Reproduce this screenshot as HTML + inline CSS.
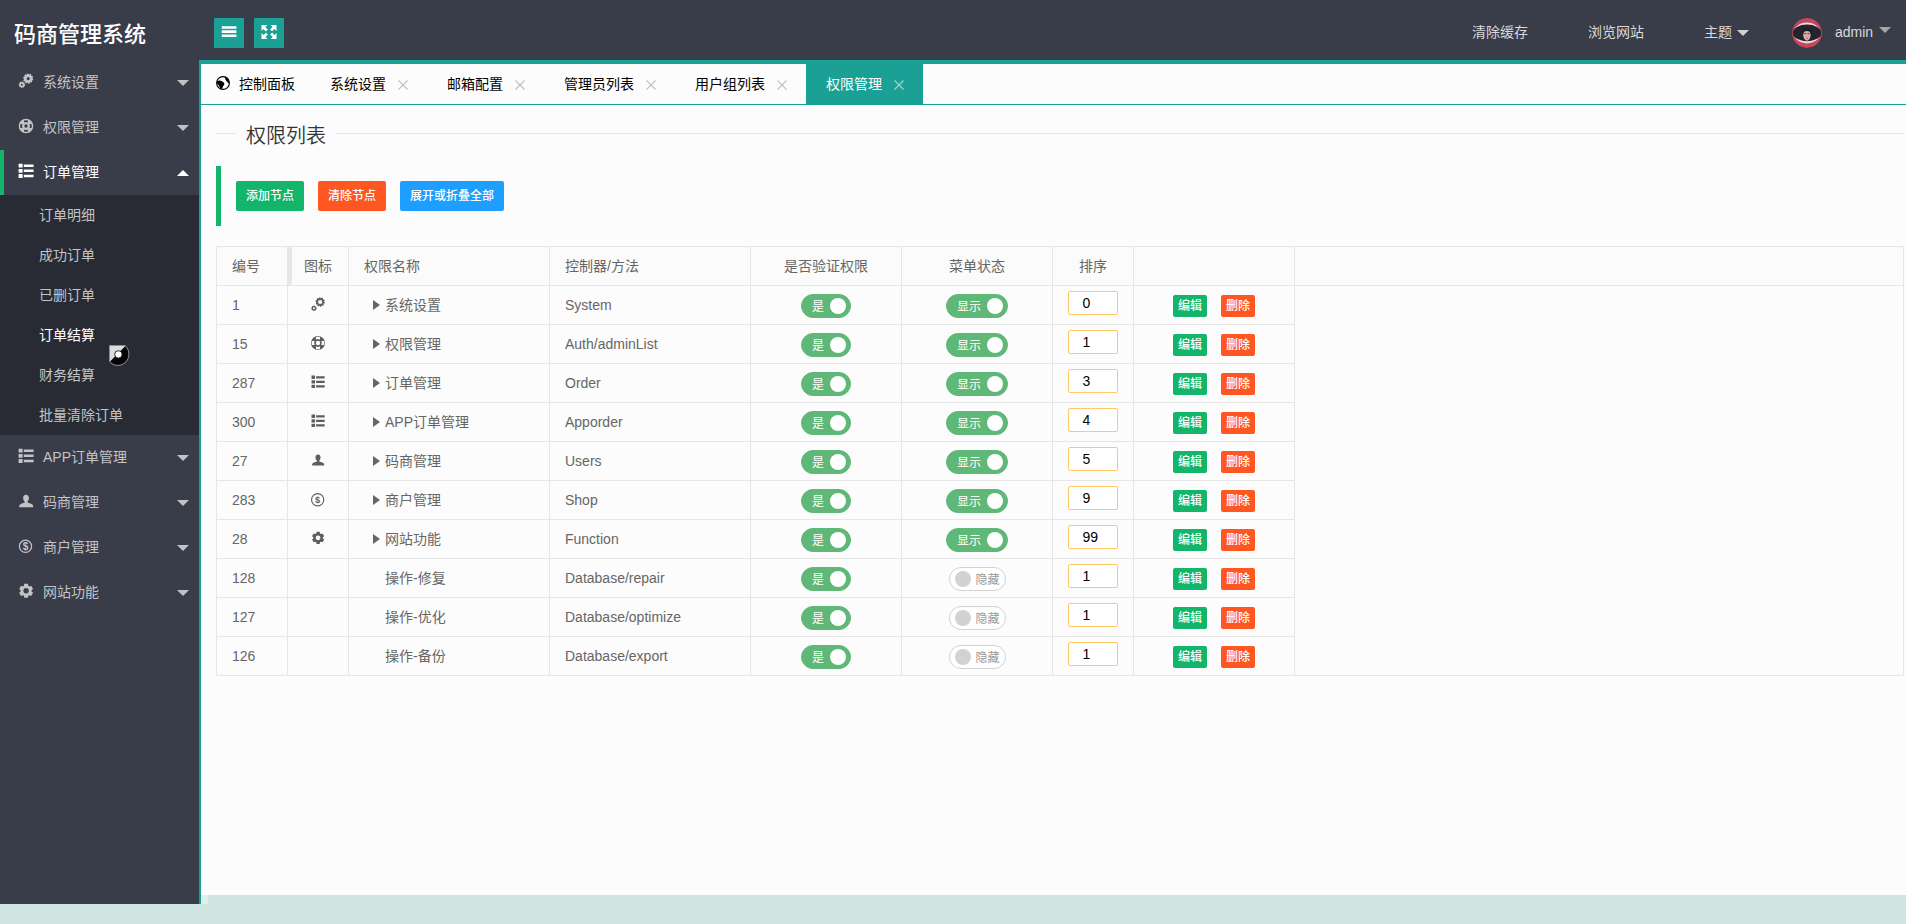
<!DOCTYPE html>
<html lang="zh-CN">
<head>
<meta charset="utf-8">
<title>码商管理系统</title>
<style>
*{box-sizing:border-box;margin:0;padding:0}
html,body{width:1906px;height:924px;overflow:hidden}
body{position:relative;background:#d0e4e2;font-family:"Liberation Sans","Noto Sans CJK SC",sans-serif;font-size:14px;color:#666;line-height:1}
a{text-decoration:none;color:inherit}
svg{display:block}
.abs{position:absolute}
/* header */
#hd{position:absolute;left:0;top:0;width:1906px;height:60px;background:#393d49}
#logo{position:absolute;left:14px;top:0;height:60px;line-height:70px;font-size:22px;color:#fff;white-space:nowrap;font-weight:500}
.hbtn{position:absolute;top:18px;width:30px;height:30px;background:#1aa094}
.hnav{position:absolute;top:0;height:60px;line-height:64px;color:#d9dadc;font-size:14px;white-space:nowrap}
.caret{position:absolute;width:0;height:0;border:6px solid transparent;border-top-color:#d2d2d2;border-bottom-width:0}
/* sidebar */
#side{position:absolute;left:0;top:60px;width:199px;height:844px;background:#393d49}
.mi{position:absolute;left:0;width:199px;height:45px;line-height:45px;color:#c2c4c8;white-space:nowrap}
.mi .tx{position:absolute;left:43px;top:0}
.mi .ic{position:absolute;left:18px;top:13px;width:16px;height:16px}
.mi .ar{position:absolute;left:177px;top:20px;width:0;height:0;border:6px solid transparent;border-top-color:#c2c2c2;border-bottom-width:0}
.mi.on{color:#fff}
.mi.on .ar{border-top-width:0;border-bottom-width:6px;border-bottom-color:#fff;top:20px}
.sub{position:absolute;left:0;top:135px;width:199px;height:240px;background:#282b33}
.si{position:absolute;left:39px;height:40px;line-height:40px;color:#c2c4c8;white-space:nowrap}
/* body */
#bd{position:absolute;left:199px;top:60px;width:1707px;height:835px;background:#fcfcfc;border-left:2px solid #1aa094;border-top:4px solid #1aa094}
#tabs{position:absolute;left:201px;top:64px;width:1705px;height:41px;border-bottom:1px solid #1aa094}
.tab{position:absolute;top:0;height:40px;line-height:40px;color:#000;white-space:nowrap}
.tab .t{position:absolute;top:0;left:20px}
.tab .x{position:absolute;top:14.500px;width:12px;height:12px}
.tab.act{background:#1aa094;color:#fff}
/* content */
.btn{position:absolute;height:30px;line-height:30px;padding:0 10px;font-size:12px;color:#fff;border-radius:2px;white-space:nowrap;font-weight:500}
table{position:absolute;left:216px;top:246px;border-collapse:collapse;table-layout:fixed;width:1688px}
td,th{border:1px solid #e6e6e6;height:39px;font-weight:normal;text-align:left;padding:0 15px;font-size:14px;color:#666;white-space:nowrap;position:relative}
th{background:#fbfbfb}
.c{text-align:center;padding:0}
.sw{display:inline-block;vertical-align:middle;position:relative;height:24px;line-height:24px;border-radius:12px;border:1px solid #5fb878;background:#5fb878;color:#fff;font-size:12px;text-align:left;margin-top:1px}
.sw i{position:absolute;top:3px;width:16px;height:16px;border-radius:50%;background:#fff}
.sw.y{width:50px;padding-left:10px}
.sw.y i{right:4px}
.sw.s{width:62px;padding-left:10px}
.sw.s i{right:4px}
.sw.h{width:57px;background:#fff;border-color:#d2d2d2;color:#999;padding-left:26px}
.sw.h i{left:5px;background:#d2d2d2}
.inp{display:inline-block;width:50px;height:24px;line-height:22px;border:1px solid #ffc966;background:#fff;color:#000;font-size:14px;text-align:left;border-radius:2px;vertical-align:middle;margin-top:-4px;padding-left:13.500px}
.xs{position:absolute;top:9px;height:22px;line-height:23px;width:34px;text-align:center;font-size:12px;color:#fff;border-radius:2px;font-weight:500}
.g{background:#13b56a}.r{background:#ff5722}.b{background:#1e9fff}
.tri{display:inline-block;width:0;height:0;border:5px solid transparent;border-left:7px solid #666;border-right-width:0;margin-right:5px;vertical-align:0}
.ti{position:absolute;left:23px;top:10.500px;width:14px;height:14px}
</style>
</head>
<body>
<svg width="0" height="0" style="position:absolute"><defs>
<symbol id="i-cogs" viewBox="0 0 16 16"><path fill-rule="evenodd" d="M14.45 5.45L15.29 5.85L14.99 7.35L14.05 7.39L13.73 7.97L14.17 8.80L13.04 9.83L12.26 9.32L11.66 9.59L11.54 10.52L10.01 10.70L9.69 9.82L9.03 9.69L8.39 10.37L7.05 9.61L7.30 8.71L6.85 8.22L5.93 8.39L5.30 7.00L6.03 6.41L5.95 5.75L5.11 5.35L5.41 3.85L6.35 3.81L6.67 3.23L6.23 2.40L7.36 1.37L8.14 1.88L8.74 1.61L8.86 0.68L10.39 0.50L10.71 1.38L11.37 1.51L12.01 0.83L13.35 1.59L13.10 2.49L13.55 2.98L14.47 2.81L15.10 4.20L14.37 4.79ZM8.60 5.60a1.6 1.6 0 1 0 3.2 0a1.6 1.6 0 1 0 -3.2 0ZM6.55 11.19L7.24 11.41L7.11 12.64L6.40 12.72L6.15 13.18L6.48 13.82L5.52 14.60L4.96 14.15L4.46 14.30L4.24 14.99L3.01 14.86L2.93 14.15L2.47 13.90L1.83 14.23L1.05 13.27L1.50 12.71L1.35 12.21L0.66 11.99L0.79 10.76L1.50 10.68L1.75 10.22L1.42 9.58L2.38 8.80L2.94 9.25L3.44 9.10L3.66 8.41L4.89 8.54L4.97 9.25L5.43 9.50L6.07 9.17L6.85 10.13L6.40 10.69ZM3.00 11.70a0.95 0.95 0 1 0 1.9 0a0.95 0.95 0 1 0 -1.9 0Z"/></symbol>
<symbol id="i-ring" viewBox="0 0 16 16"><path fill-rule="evenodd" d="M8 0.7000000000000002a7.3 7.3 0 1 0 0 14.6a7.3 7.3 0 1 0 0 -14.6zM8 6.3a1.7 1.7 0 1 1 0 3.4a1.7 1.7 0 1 1 0 -3.4zM6.10 2.52A5.8 5.8 0 0 1 9.90 2.52L9.90 4.48A4.0 4.0 0 0 0 6.10 4.48ZM13.48 6.10A5.8 5.8 0 0 1 13.48 9.90L11.52 9.90A4.0 4.0 0 0 0 11.52 6.10ZM9.90 13.48A5.8 5.8 0 0 1 6.10 13.48L6.10 11.52A4.0 4.0 0 0 0 9.90 11.52ZM2.52 9.90A5.8 5.8 0 0 1 2.52 6.10L4.48 6.10A4.0 4.0 0 0 0 4.48 9.90Z"/></symbol>
<symbol id="i-list" viewBox="0 0 16 16"><path d="M.6 .7h4v3.800h-4zM5.800 1.400h9.800v2.500H5.800zM.6 5.900h4v3.800h-4zM5.800 6.600h9.800v2.500H5.800zM.6 11.100h4v3.800h-4zM5.800 11.800h9.800v2.500H5.800z"/></symbol>
<symbol id="i-user" viewBox="0 0 16 16"><path d="M8 1.800c1.800 0 2.900 1.300 2.900 3.300 0 1.500-.6 2.700-1.400 3.500v1c1.500.5 4.500 1.300 5.300 2.500.3.600.4 1.400.4 2.100H1.200c0-.7.100-1.500.4-2.100.8-1.200 3.600-2 5.100-2.500v-1C5.800 7.800 5.100 6.600 5.100 5.100 5.100 3.100 6.200 1.800 8 1.800z"/></symbol>
<symbol id="i-usd" viewBox="0 0 16 16"><circle cx="7.500" cy="8.300" r="6.100" fill="none" stroke="currentColor" stroke-width="1.200"/><text x="7.500" y="11.800" font-size="10" font-weight="bold" text-anchor="middle" font-family="Liberation Sans, sans-serif">$</text></symbol>
<symbol id="i-cog" viewBox="0 0 16 16"><path fill-rule="evenodd" d="M10.27 12.85L9.95 14.76L6.25 14.76L5.93 12.85L4.81 12.21L3.00 12.88L1.15 9.68L2.64 8.45L2.64 7.15L1.15 5.92L3.00 2.72L4.81 3.39L5.93 2.75L6.25 0.84L9.95 0.84L10.27 2.75L11.39 3.39L13.20 2.72L15.05 5.92L13.56 7.15L13.56 8.45L15.05 9.68L13.20 12.88L11.39 12.21ZM5.40 7.80a2.7 2.7 0 1 0 5.4 0a2.7 2.7 0 1 0 -5.4 0Z"/></symbol>
<symbol id="i-x" viewBox="0 0 12 12"><path d="M1.500 1.500l9 9M10.500 1.500l-9 9" stroke="currentColor" stroke-width="1.200" fill="none"/></symbol>
<symbol id="i-cogs2" viewBox="0 0 16 16"><path fill-rule="evenodd" d="M14.90 5.54L15.89 5.97L15.57 7.56L14.49 7.56L14.15 8.16L14.71 9.09L13.51 10.18L12.64 9.55L12.01 9.83L11.91 10.91L10.30 11.10L9.97 10.07L9.29 9.93L8.58 10.75L7.17 9.95L7.50 8.92L7.03 8.41L5.98 8.66L5.31 7.18L6.18 6.54L6.10 5.86L5.11 5.43L5.43 3.84L6.51 3.84L6.85 3.24L6.29 2.31L7.49 1.22L8.36 1.85L8.99 1.57L9.09 0.49L10.70 0.30L11.03 1.33L11.71 1.47L12.42 0.65L13.83 1.45L13.50 2.48L13.97 2.99L15.02 2.74L15.69 4.22L14.82 4.86ZM8.10 5.70a2.4 2.4 0 1 0 4.8 0a2.4 2.4 0 1 0 -4.8 0ZM5.85 12.42L6.59 12.62L6.47 13.81L5.71 13.86L5.48 14.29L5.85 14.95L4.93 15.71L4.35 15.21L3.88 15.35L3.68 16.09L2.49 15.97L2.44 15.21L2.01 14.98L1.35 15.35L0.59 14.43L1.09 13.85L0.95 13.38L0.21 13.18L0.33 11.99L1.09 11.94L1.32 11.51L0.95 10.85L1.87 10.09L2.45 10.59L2.92 10.45L3.12 9.71L4.31 9.83L4.36 10.59L4.79 10.82L5.45 10.45L6.21 11.37L5.71 11.95ZM2.25 12.90a1.15 1.15 0 1 0 2.3 0a1.15 1.15 0 1 0 -2.3 0Z"/></symbol>
<symbol id="i-ring2" viewBox="0 0 16 16"><path fill-rule="evenodd" d="M8 0.0a8.0 8.0 0 1 0 0 16.0a8.0 8.0 0 1 0 0 -16.0zM8 5.5a2.5 2.5 0 1 1 0 5.0a2.5 2.5 0 1 1 0 -5.0zM5.70 1.18A7.2 7.2 0 0 1 10.30 1.18L10.30 4.25A4.4 4.4 0 0 0 5.70 4.25ZM14.82 5.70A7.2 7.2 0 0 1 14.82 10.30L11.75 10.30A4.4 4.4 0 0 0 11.75 5.70ZM10.30 14.82A7.2 7.2 0 0 1 5.70 14.82L5.70 11.75A4.4 4.4 0 0 0 10.30 11.75ZM1.18 10.30A7.2 7.2 0 0 1 1.18 5.70L4.25 5.70A4.4 4.4 0 0 0 4.25 10.30Z"/></symbol>
<symbol id="i-usd2" viewBox="0 0 16 16" overflow="visible"><circle cx="7.600" cy="8.800" r="7" fill="none" stroke="currentColor" stroke-width="1.300"/><text x="7.600" y="12.500" font-size="10.500" font-weight="bold" text-anchor="middle" font-family="Liberation Sans, sans-serif">$</text></symbol>
</defs></svg>
<div id="hd">
  <div id="logo">码商管理系统</div>
  <div class="hbtn" style="left:214px"><svg width="30" height="30" viewBox="0 0 30 30"><path d="M7.800 8.200h14.600v2.600H7.800zM7.800 12.300h14.600v2.600H7.800zM7.800 16.400h14.600v2.600H7.800z" fill="#fff"/></svg></div>
  <div class="hbtn" style="left:254px"><svg width="30" height="30" viewBox="0 0 30 30" fill="#fff"><path d="M7.5 7h6l-2.1 2.1 2.4 2.4-1.9 1.9-2.4-2.4L7.5 13zM22.500 7v6l-2.100-2.100-2.400 2.400-1.900-1.900 2.400-2.400L16.500 7zM7.500 21v-6l2.100 2.100 2.400-2.400 1.900 1.900-2.400 2.400 2.100 2.100zM22.500 21h-6l2.100-2.100-2.400-2.400 1.900-1.900 2.400 2.400 2.100-2.100z"/></svg></div>
  <div class="hnav" style="left:1472px">清除缓存</div>
  <div class="hnav" style="left:1588px">浏览网站</div>
  <div class="hnav" style="left:1704px">主题</div>
  <div class="caret" style="left:1737px;top:30px"></div>
  <div class="hnav" style="left:1835px">admin</div>
  <div class="caret" style="left:1879px;top:27px;border-top-color:#a6a6a6"></div>
  <svg class="abs" style="left:1792px;top:18px" width="30" height="30" viewBox="0 0 30 30"><defs><clipPath id="av"><circle cx="15" cy="15" r="15"/></clipPath></defs><g clip-path="url(#av)"><circle cx="15" cy="15" r="15" fill="#c8465b"/><ellipse cx="15" cy="15" rx="13.400" ry="10.400" fill="#e6dadd"/><ellipse cx="15" cy="14.900" rx="14.200" ry="8.300" fill="#24242c"/><path d="M11.200 23c.5-1.500 1.500-2 3.700-2s3.200.5 3.700 2z" fill="#1a1a20"/><ellipse cx="14.900" cy="17.300" rx="3.700" ry="5.400" fill="#d9aba3"/><path d="M10.400 15.800q-.6-5.600 4.500-5.600t4.500 5.600q-.8-2.900-4.500-2.900t-4.500 2.900z" fill="#1c1c22"/><path d="M12.200 15.700h2.100M15.600 15.700h2.100" stroke="#3a2a2a" stroke-width=".8"/><path d="M14.200 20.200h1.400" stroke="#a8445a" stroke-width="1"/></g></svg>
</div>

<div id="side">
  <div class="mi" style="top:0"><svg class="ic" viewBox="0 0 16 16" fill="currentColor"><use href="#i-cogs"/></svg><span class="tx">系统设置</span><i class="ar"></i></div>
  <div class="mi" style="top:45px"><svg class="ic" viewBox="0 0 16 16" fill="currentColor"><use href="#i-ring"/></svg><span class="tx">权限管理</span><i class="ar"></i></div>
  <div class="mi on" style="top:90px"><svg class="ic" viewBox="0 0 16 16" fill="currentColor"><use href="#i-list"/></svg><span class="tx">订单管理</span><i class="ar"></i><i class="abs" style="left:0;top:0;width:4px;height:45px;background:#13b56a"></i></div>
  <div class="sub">
    <div class="si" style="top:0">订单明细</div>
    <div class="si" style="top:40px">成功订单</div>
    <div class="si" style="top:80px">已删订单</div>
    <div class="si" style="top:120px;color:#fff">订单结算</div>
    <div class="si" style="top:160px">财务结算</div>
    <div class="si" style="top:200px">批量清除订单</div>
  </div>
  <div class="mi" style="top:375px"><svg class="ic" viewBox="0 0 16 16" fill="currentColor"><use href="#i-list"/></svg><span class="tx">APP订单管理</span><i class="ar"></i></div>
  <div class="mi" style="top:420px"><svg class="ic" viewBox="0 0 16 16" fill="currentColor"><use href="#i-user"/></svg><span class="tx">码商管理</span><i class="ar"></i></div>
  <div class="mi" style="top:465px"><svg class="ic" viewBox="0 0 16 16" fill="currentColor"><use href="#i-usd"/></svg><span class="tx">商户管理</span><i class="ar"></i></div>
  <div class="mi" style="top:510px"><svg class="ic" viewBox="0 0 16 16" fill="currentColor"><use href="#i-cog"/></svg><span class="tx">网站功能</span><i class="ar"></i></div>
</div>

<svg class="abs" style="left:108.300px;top:344.300px" width="23" height="23" viewBox="0 0 23 23"><defs><clipPath id="cc"><path d="M1.500 1.500H17.300C20 4.500 21 7.500 20.900 10.500 20.700 16.500 16 21.400 10 21.400 6.500 21.400 3.500 20 1.500 17.400Z"/></clipPath></defs><path d="M1.500 1.500H17.300C20 4.500 21 7.500 20.900 10.500 20.700 16.500 16 21.400 10 21.400 6.500 21.400 3.500 20 1.500 17.400Z" fill="#dcdcdc"/><path clip-path="url(#cc)" d="M0 19.400L19.400 0H23V23H0z" fill="#050505"/><path d="M1.500 1.500H17.300C20 4.500 21 7.500 20.900 10.500 20.700 16.500 16 21.400 10 21.400 6.500 21.400 3.500 20 1.500 17.400Z" fill="none" stroke="#8c8c8c" stroke-width="1"/><circle cx="10.400" cy="10.400" r="3.700" fill="#fff" stroke="#111" stroke-width=".9"/></svg>
<div id="bd"></div>
<div class="abs" style="left:199px;top:60px;width:2px;height:844px;background:#1aa094"></div>
<div class="abs" style="left:201px;top:895px;width:7px;height:9px;background:#dcefec"></div>
<div id="tabs">
  <div class="tab" style="left:0;width:109px"><svg class="abs" style="left:15px;top:12px" width="14" height="14" viewBox="0 0 14 14"><circle cx="7" cy="7" r="6.400" fill="#fff" stroke="#000" stroke-width="1.100"/><path d="M8 .600C11.500.600 13.500 3.600 13.400 7.800 11.800 7.400 11.600 5.800 10.400 5 9 4.100 9.800 2.200 8 .600zM.800 5.600C2.400 4.200 4.400 4.400 6.400 5.400 8.600 6.400 9 8.200 7.600 9.400 6.400 10.400 6.900 12.400 5.300 13.300 3.300 12.800 3.900 10.600 2.900 9.600 1.900 8.600.600 7.800.800 5.600z" fill="#000"/></svg><span class="t" style="left:38px">控制面板</span></div>
  <div class="tab" style="left:109px;width:117px"><span class="t">系统设置</span><svg class="x" style="left:87px;color:#c2c2c2" viewBox="0 0 12 12"><use href="#i-x"/></svg></div>
  <div class="tab" style="left:226px;width:117px"><span class="t">邮箱配置</span><svg class="x" style="left:87px;color:#c2c2c2" viewBox="0 0 12 12"><use href="#i-x"/></svg></div>
  <div class="tab" style="left:343px;width:131px"><span class="t">管理员列表</span><svg class="x" style="left:101px;color:#c2c2c2" viewBox="0 0 12 12"><use href="#i-x"/></svg></div>
  <div class="tab" style="left:474px;width:131px"><span class="t">用户组列表</span><svg class="x" style="left:101px;color:#c2c2c2" viewBox="0 0 12 12"><use href="#i-x"/></svg></div>
  <div class="tab act" style="left:605px;width:117px"><span class="t">权限管理</span><svg class="x" style="left:87px;color:#a3d2cc" viewBox="0 0 12 12"><use href="#i-x"/></svg></div>
</div>

<!-- fieldset title -->
<div class="abs" style="left:216px;top:133px;width:20px;height:1px;background:#e6e6e6"></div>
<div class="abs" style="left:336px;top:133px;width:1568px;height:1px;background:#e6e6e6"></div>
<div class="abs" style="left:246px;top:121px;height:30px;line-height:30px;font-size:20px;color:#333;white-space:nowrap;font-weight:350">权限列表</div>

<!-- blockquote -->
<div class="abs" style="left:216px;top:166px;width:5px;height:60px;background:#13b56a"></div>
<a class="btn g" style="left:236px;top:181px">添加节点</a>
<a class="btn r" style="left:318px;top:181px">清除节点</a>
<a class="btn b" style="left:400px;top:181px">展开或折叠全部</a>

<div class="abs" style="left:288px;top:247px;width:4px;height:38px;background:#e6e6e6;border-radius:0 3px 3px 0;z-index:2"></div>
<table id="tb">
<colgroup><col style="width:71px"><col style="width:61px"><col style="width:201px"><col style="width:201px"><col style="width:151px"><col style="width:151px"><col style="width:81px"><col style="width:161px"><col></colgroup>
<tr><th>编号</th><th class="c">图标</th><th>权限名称</th><th>控制器/方法</th><th class="c">是否验证权限</th><th class="c">菜单状态</th><th class="c">排序</th><th></th><th></th></tr>
<tr><td>1</td><td class="c"><svg class="ti" viewBox="0 0 16 16" fill="#5e5e5e" color="#5e5e5e"><use href="#i-cogs2"/></svg></td><td><span style="padding-left:9px"><i class="tri"></i>系统设置</span></td><td>System</td><td class="c"><span class="sw y">是<i></i></span></td><td class="c"><span class="sw s">显示<i></i></span></td><td class="c"><span class="inp">0</span></td><td><a class="xs g" style="left:39px">编辑</a><a class="xs r" style="left:87px">删除</a></td><td rowspan="10"></td></tr>
<tr><td>15</td><td class="c"><svg class="ti" viewBox="0 0 16 16" fill="#5e5e5e" color="#5e5e5e"><use href="#i-ring2"/></svg></td><td><span style="padding-left:9px"><i class="tri"></i>权限管理</span></td><td>Auth/adminList</td><td class="c"><span class="sw y">是<i></i></span></td><td class="c"><span class="sw s">显示<i></i></span></td><td class="c"><span class="inp">1</span></td><td><a class="xs g" style="left:39px">编辑</a><a class="xs r" style="left:87px">删除</a></td></tr>
<tr><td>287</td><td class="c"><svg class="ti" viewBox="0 0 16 16" fill="#5e5e5e" color="#5e5e5e"><use href="#i-list"/></svg></td><td><span style="padding-left:9px"><i class="tri"></i>订单管理</span></td><td>Order</td><td class="c"><span class="sw y">是<i></i></span></td><td class="c"><span class="sw s">显示<i></i></span></td><td class="c"><span class="inp">3</span></td><td><a class="xs g" style="left:39px">编辑</a><a class="xs r" style="left:87px">删除</a></td></tr>
<tr><td>300</td><td class="c"><svg class="ti" viewBox="0 0 16 16" fill="#5e5e5e" color="#5e5e5e"><use href="#i-list"/></svg></td><td><span style="padding-left:9px"><i class="tri"></i>APP订单管理</span></td><td>Apporder</td><td class="c"><span class="sw y">是<i></i></span></td><td class="c"><span class="sw s">显示<i></i></span></td><td class="c"><span class="inp">4</span></td><td><a class="xs g" style="left:39px">编辑</a><a class="xs r" style="left:87px">删除</a></td></tr>
<tr><td>27</td><td class="c"><svg class="ti" viewBox="0 0 16 16" fill="#5e5e5e" color="#5e5e5e"><use href="#i-user"/></svg></td><td><span style="padding-left:9px"><i class="tri"></i>码商管理</span></td><td>Users</td><td class="c"><span class="sw y">是<i></i></span></td><td class="c"><span class="sw s">显示<i></i></span></td><td class="c"><span class="inp">5</span></td><td><a class="xs g" style="left:39px">编辑</a><a class="xs r" style="left:87px">删除</a></td></tr>
<tr><td>283</td><td class="c"><svg class="ti" viewBox="0 0 16 16" fill="#5e5e5e" color="#5e5e5e" style="overflow:visible"><use href="#i-usd2"/></svg></td><td><span style="padding-left:9px"><i class="tri"></i>商户管理</span></td><td>Shop</td><td class="c"><span class="sw y">是<i></i></span></td><td class="c"><span class="sw s">显示<i></i></span></td><td class="c"><span class="inp">9</span></td><td><a class="xs g" style="left:39px">编辑</a><a class="xs r" style="left:87px">删除</a></td></tr>
<tr><td>28</td><td class="c"><svg class="ti" viewBox="0 0 16 16" fill="#5e5e5e" color="#5e5e5e"><use href="#i-cog"/></svg></td><td><span style="padding-left:9px"><i class="tri"></i>网站功能</span></td><td>Function</td><td class="c"><span class="sw y">是<i></i></span></td><td class="c"><span class="sw s">显示<i></i></span></td><td class="c"><span class="inp">99</span></td><td><a class="xs g" style="left:39px">编辑</a><a class="xs r" style="left:87px">删除</a></td></tr>
<tr><td>128</td><td class="c"></td><td><span style="padding-left:21px">操作-修复</span></td><td>Database/repair</td><td class="c"><span class="sw y">是<i></i></span></td><td class="c"><span class="sw h"><i></i>隐藏</span></td><td class="c"><span class="inp">1</span></td><td><a class="xs g" style="left:39px">编辑</a><a class="xs r" style="left:87px">删除</a></td></tr>
<tr><td>127</td><td class="c"></td><td><span style="padding-left:21px">操作-优化</span></td><td>Database/optimize</td><td class="c"><span class="sw y">是<i></i></span></td><td class="c"><span class="sw h"><i></i>隐藏</span></td><td class="c"><span class="inp">1</span></td><td><a class="xs g" style="left:39px">编辑</a><a class="xs r" style="left:87px">删除</a></td></tr>
<tr><td>126</td><td class="c"></td><td><span style="padding-left:21px">操作-备份</span></td><td>Database/export</td><td class="c"><span class="sw y">是<i></i></span></td><td class="c"><span class="sw h"><i></i>隐藏</span></td><td class="c"><span class="inp">1</span></td><td><a class="xs g" style="left:39px">编辑</a><a class="xs r" style="left:87px">删除</a></td></tr>

</table>
</body>
</html>
